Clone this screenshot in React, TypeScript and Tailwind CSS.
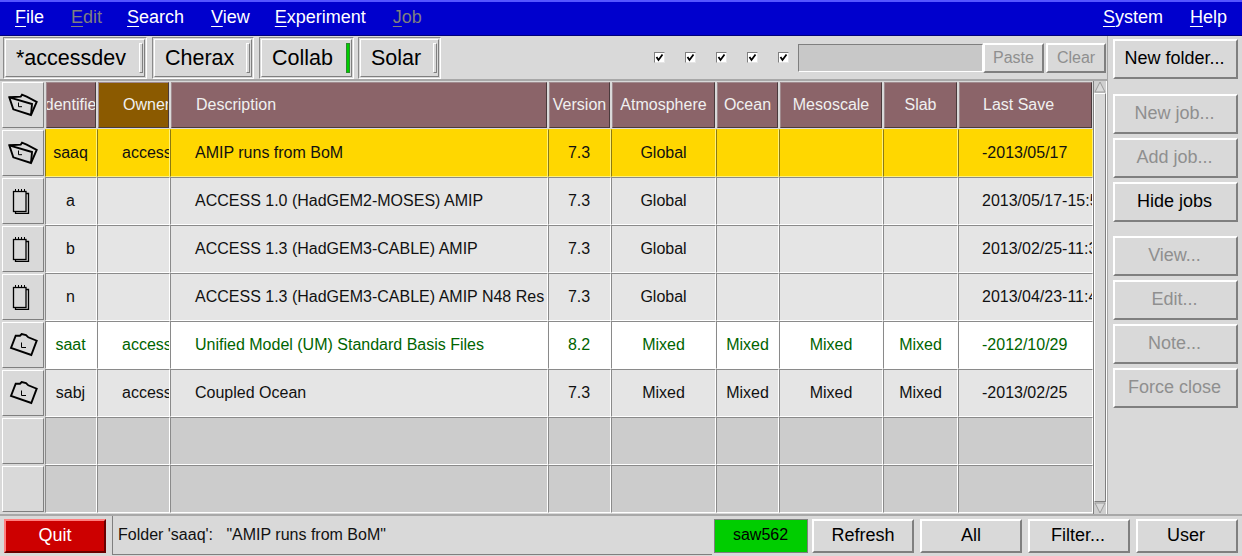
import React from 'react'

const colWidths = ['w-[52px]', 'w-[73px]', 'w-[378px]', 'w-[63px]', 'w-[105px]', 'w-[63px]', 'w-[104px]', 'w-[75px]', 'w-[135px]']
const headerPad = ['justify-center', 'pl-[24px]', 'pl-[24px]', 'justify-center', 'justify-center', 'justify-center', 'justify-center', 'justify-center', 'pl-[23px]']
const cellPad = ['justify-center pr-[1px]', 'pl-[24px]', 'pl-[24px]', 'justify-center pr-[1px]', 'justify-center', 'justify-center', 'justify-center', 'justify-center', 'pl-[23px]']

const headers = ['Identifier', 'Owner', 'Description', 'Version', 'Atmosphere', 'Ocean', 'Mesoscale', 'Slab', 'Last Save']

type RowKind = 'selected' | 'job' | 'green' | 'folder' | 'empty'
type IconKind = 'open' | 'closed' | 'note' | 'none'

const rows: { kind: RowKind; icon: IconKind; cells: string[] }[] = [
  { kind: 'selected', icon: 'open', cells: ['saaq', 'access', 'AMIP runs from BoM', '7.3', 'Global', '', '', '', '-2013/05/17'] },
  { kind: 'job', icon: 'note', cells: ['a', '', 'ACCESS 1.0 (HadGEM2-MOSES) AMIP', '7.3', 'Global', '', '', '', '2013/05/17-15:59'] },
  { kind: 'job', icon: 'note', cells: ['b', '', 'ACCESS 1.3 (HadGEM3-CABLE) AMIP', '7.3', 'Global', '', '', '', '2013/02/25-11:30'] },
  { kind: 'job', icon: 'note', cells: ['n', '', 'ACCESS 1.3 (HadGEM3-CABLE) AMIP N48 Res', '7.3', 'Global', '', '', '', '2013/04/23-11:40'] },
  { kind: 'green', icon: 'closed', cells: ['saat', 'access', 'Unified Model (UM) Standard Basis Files', '8.2', 'Mixed', 'Mixed', 'Mixed', 'Mixed', '-2012/10/29'] },
  { kind: 'folder', icon: 'closed', cells: ['sabj', 'access', 'Coupled Ocean', '7.3', 'Mixed', 'Mixed', 'Mixed', 'Mixed', '-2013/02/25'] },
  { kind: 'empty', icon: 'none', cells: ['', '', '', '', '', '', '', '', ''] },
  { kind: 'empty', icon: 'none', cells: ['', '', '', '', '', '', '', '', ''] },
]

const rowStyles: Record<RowKind, string> = {
  selected: 'bg-[#ffd700] text-[#111] border-t-[#ffd700] border-l-[#8c7a10] border-b-[#fff27a] border-r-[#fff27a]',
  job: 'bg-[#e5e5e5] text-[#111] border-t-[#8a8a8a] border-l-[#8a8a8a] border-b-white border-r-white',
  green: 'bg-white text-[#006400] border-t-[#8a8a8a] border-l-[#8a8a8a] border-b-white border-r-white',
  folder: 'bg-[#e5e5e5] text-[#111] border-t-[#8a8a8a] border-l-[#8a8a8a] border-b-white border-r-white',
  empty: 'bg-[#cccccc] border-t-[#8a8a8a] border-l-[#8a8a8a] border-b-white border-r-white',
}

function RowIcon({ kind }: { kind: IconKind }) {
  if (kind === 'open') {
    return (
      <svg width="30" height="24" viewBox="0 0 30 24" fill="none" stroke="black" strokeWidth="1.9">
        <path d="M1.3 4.3 L12.7 3.7 L14 1.7 L18.7 3.7 L28.7 9 L23 22 L5.3 16.3 Z" />
        <path d="M1.3 4.3 L24 11 L23 22" />
        <path d="M10.5 9.5 V13.7 H14" strokeWidth="1" />
      </svg>
    )
  }
  if (kind === 'closed') {
    return (
      <svg width="30" height="24" viewBox="0 0 30 24" fill="none" stroke="black" strokeWidth="1.9">
        <path d="M7.7 2.7 L12 2.7 L13.7 1 L18 2 L20.3 4.3 L28.7 7.7 L23.3 22 L3 15 Z" />
        <path d="M13.5 9.5 V14.5 H18" strokeWidth="1" />
      </svg>
    )
  }
  if (kind === 'note') {
    return (
      <svg width="26" height="26" viewBox="0 0 26 26" fill="none" stroke="black" strokeWidth="1.3">
        <rect x="3.5" y="3.5" width="12.5" height="20" />
        <path d="M16 5.5 H18.5 V25.5 H5.5 V23.5" />
        <path d="M5.5 1 V4 M8.5 1 V4 M11.5 1 V4 M14.5 1 V4" strokeWidth="1" />
      </svg>
    )
  }
  return null
}

function IconButton({ icon }: { icon: IconKind }) {
  return (
    <div className="w-[42px] h-[46px] mt-px ml-[2px] mr-px shrink-0 flex items-center justify-center bg-[#d9d9d9] border border-t-white border-l-white border-b-[#7f7f7f] border-r-[#7f7f7f]">
      <RowIcon kind={icon} />
    </div>
  )
}

function Bevel({ children, disabled, className, small, nudge = 'pb-[2px] pr-[2px]' }: { children: React.ReactNode; disabled?: boolean; className?: string; small?: boolean; nudge?: string }) {
  return (
    <button
      className={`flex items-center justify-center bg-[#d9d9d9] border-2 border-t-white border-l-white border-b-[#7f7f7f] border-r-[#7f7f7f] whitespace-nowrap ${small ? 'text-[16px]' : `text-[18px] ${nudge}`} ${disabled ? 'text-[#8f8f8f]' : 'text-black'} ${className ?? ''}`}
    >
      {children}
    </button>
  )
}

function MenuItem({ first, rest, disabled, className }: { first: string; rest: string; disabled?: boolean; className?: string }) {
  return (
    <span className={`${disabled ? 'text-[#7f7f7f]' : 'text-white'} ${className ?? ''}`}>
      <span className="underline underline-offset-[3px] decoration-1">{first}</span>
      {rest}
    </span>
  )
}

function Tab({ label, className, green }: { label: string; className: string; green?: boolean }) {
  return (
    <div className={`h-[42px] shrink-0 flex items-center justify-between border border-t-[#8a8a8a] border-l-[#8a8a8a] border-b-white border-r-white p-px ${className}`}>
      <div className="flex-1 h-full flex items-center justify-between border border-t-white border-l-white border-b-[#7f7f7f] border-r-[#7f7f7f] pl-[10px] pr-px">
        <span className="text-[21.5px] text-black whitespace-nowrap pt-[2px]">{label}</span>
        <span className={`w-[4px] h-[30px] border ${green ? 'bg-[#00cd00] border-[#2b8a2b]' : 'bg-[#d9d9d9] border-t-white border-l-white border-b-[#7f7f7f] border-r-[#7f7f7f]'}`} />
      </div>
    </div>
  )
}

function Check() {
  return (
    <span className="w-[11px] h-[11px] bg-white border border-t-[#7f7f7f] border-l-[#7f7f7f] border-b-[#e5e5e5] border-r-[#e5e5e5] flex items-center justify-center">
      <svg width="9" height="9" viewBox="0 0 9 9" fill="none" stroke="black" strokeWidth="1.8">
        <path d="M1.5 4 L3.5 7 L7.5 1.5" />
      </svg>
    </span>
  )
}

export default function App() {
  return (
    <div className="w-[1242px] h-[556px] flex flex-col overflow-hidden bg-[#d9d9d9] font-['Liberation_Sans',Arial,sans-serif]">
      {/* Menu bar */}
      <header className="h-[36px] shrink-0 flex items-center bg-[#0000cd] border-t-2 border-t-[#5555ff] border-b border-b-[#00007a] text-[18px] pb-[2px]">
        <MenuItem first="F" rest="ile" className="ml-[15px]" />
        <MenuItem first="E" rest="dit" disabled className="ml-[27px]" />
        <MenuItem first="S" rest="earch" className="ml-[25px]" />
        <MenuItem first="V" rest="iew" className="ml-[27px]" />
        <MenuItem first="E" rest="xperiment" className="ml-[25px]" />
        <MenuItem first="J" rest="ob" disabled className="ml-[27px]" />
        <MenuItem first="S" rest="ystem" className="ml-auto" />
        <MenuItem first="H" rest="elp" className="ml-[27px] mr-[15px]" />
      </header>

      <div className="flex-1 flex min-h-0">
        <div className="w-[1107px] flex flex-col shrink-0">
          {/* Toolbar */}
          <div className="h-[45px] shrink-0 flex items-center border-b-2 border-b-[#a8a8a8] pl-[3px]">
            <Tab label="*accessdev" className="w-[144px]" />
            <Tab label="Cherax" className="w-[102px] ml-[5px]" />
            <Tab label="Collab" className="w-[95px] ml-[5px]" green />
            <Tab label="Solar" className="w-[83px] ml-[4px]" />
            <div className="flex items-center gap-[20px] ml-[213px]">
              <Check />
              <Check />
              <Check />
              <Check />
              <Check />
            </div>
            <div className="w-[185px] h-[28px] ml-[9px] bg-[#c8c8c8] border border-t-[#7f7f7f] border-l-[#7f7f7f] border-b-white border-r-white" />
            <Bevel disabled small className="w-[61px] h-[30px]">Paste</Bevel>
            <Bevel disabled small className="w-[60px] h-[30px] ml-[2px]">Clear</Bevel>
          </div>

          {/* Table */}
          <div className="flex-1 flex min-h-0">
            <div className="flex-1 flex flex-col text-[16px]">
              <div className="flex h-[48px]">
                <IconButton icon="open" />
                {headers.map((h, i) => (
                  <div key={h} className={`${colWidths[i]} h-[48px] shrink-0 px-px py-px`}>
                    <div
                      className={`h-[46px] overflow-hidden whitespace-nowrap flex items-center border border-t-[#a08a8e] border-l-[#a08a8e] border-b-[#4a3a3c] border-r-[#4a3a3c] text-[#f0f0f0] ${i === 1 ? 'bg-[#8b5a00]' : 'bg-[#8b6469]'} ${headerPad[i]}`}
                    >
                      <span className="shrink-0">{h}</span>
                    </div>
                  </div>
                ))}
              </div>
              {rows.map((row, r) => (
                <div key={r} className="flex h-[48px]">
                  <IconButton icon={row.icon} />
                  {row.cells.map((c, i) => (
                    <div
                      key={i}
                      className={`${colWidths[i]} shrink-0 overflow-hidden whitespace-nowrap flex items-center border ${rowStyles[row.kind]} ${cellPad[i]}`}
                    >
                      <span className="shrink-0">{c}</span>
                    </div>
                  ))}
                </div>
              ))}
            </div>

            {/* Scrollbar */}
            <div className="w-[14px] shrink-0 flex flex-col border-l border-l-[#7f7f7f] border-r border-r-white bg-[#cfcfcf]">
              <svg width="12" height="12" viewBox="0 0 12 12" className="shrink-0">
                <path d="M6 1 L11 11 H1 Z" fill="#d9d9d9" stroke="#9a9a9a" />
              </svg>
              <div className="flex-1 bg-[#d9d9d9] border border-t-white border-l-white border-b-[#7f7f7f] border-r-[#7f7f7f]" />
              <svg width="12" height="12" viewBox="0 0 12 12" className="shrink-0">
                <path d="M1 1 H11 L6 11 Z" fill="#d9d9d9" stroke="#9a9a9a" />
              </svg>
            </div>
          </div>
        </div>

        {/* Right panel */}
        <aside className="flex-1 border-l border-l-[#a8a8a8] flex flex-col pl-[5px] pt-[3px]">
          <Bevel className="w-[125px] h-[40px]">New folder...</Bevel>
          <Bevel disabled className="w-[125px] h-[40px] mt-[15px]">New job...</Bevel>
          <Bevel disabled className="w-[125px] h-[40px] mt-[4px]">Add job...</Bevel>
          <Bevel className="w-[125px] h-[40px] mt-[4px]">Hide jobs</Bevel>
          <Bevel disabled className="w-[125px] h-[40px] mt-[14px]">View...</Bevel>
          <Bevel disabled className="w-[125px] h-[40px] mt-[4px]">Edit...</Bevel>
          <Bevel disabled className="w-[125px] h-[40px] mt-[4px]">Note...</Bevel>
          <Bevel disabled className="w-[125px] h-[40px] mt-[4px]">Force close</Bevel>
        </aside>
      </div>

      {/* Status bar */}
      <footer className="h-[42px] shrink-0 flex items-center border-t-2 border-t-[#a8a8a8] pl-[4px] pb-px pr-[4px]">
        <button className="w-[102px] h-[34px] bg-[#cd0000] border-2 border-t-[#ff7f7f] border-l-[#ff7f7f] border-b-[#6a0000] border-r-[#6a0000] text-white text-[18px]">
          Quit
        </button>
        <div className="w-[600px] h-full ml-[6px] flex items-center pl-[5px] border-l border-l-[#7f7f7f] border-b border-b-[#7f7f7f] text-[16px] text-[#111] whitespace-pre">
          Folder 'saaq':   "AMIP runs from BoM"
        </div>
        <div className="w-[94px] h-[34px] ml-[2px] bg-[#00cd00] flex items-center justify-center pb-[2px] pr-px text-[16px] text-black border border-[#7f7f7f]">
          saw562
        </div>
        <Bevel nudge="" className="w-[102px] h-[34px] ml-[4px]">Refresh</Bevel>
        <Bevel nudge="" className="w-[102px] h-[34px] ml-[6px]">All</Bevel>
        <Bevel nudge="pr-[2px]" className="w-[102px] h-[34px] ml-[6px]">Filter...</Bevel>
        <Bevel nudge="pr-[2px]" className="w-[102px] h-[34px] ml-[6px]">User</Bevel>
      </footer>
    </div>
  )
}
